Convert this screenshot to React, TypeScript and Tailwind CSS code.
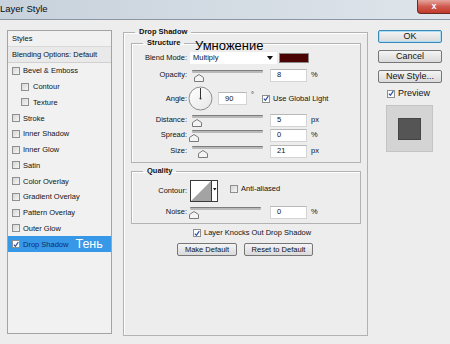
import type { ReactNode } from 'react';

const FONT = { fontFamily: '"Liberation Sans", Arial, sans-serif' };

const styleItems: { label: string; indent?: boolean; checked?: boolean; active?: boolean }[] = [
  { label: 'Bevel & Emboss' },
  { label: 'Contour', indent: true },
  { label: 'Texture', indent: true },
  { label: 'Stroke' },
  { label: 'Inner Shadow' },
  { label: 'Inner Glow' },
  { label: 'Satin' },
  { label: 'Color Overlay' },
  { label: 'Gradient Overlay' },
  { label: 'Pattern Overlay' },
  { label: 'Outer Glow' },
  { label: 'Drop Shadow', checked: true, active: true },
];

function Check({ checked = false }: { checked?: boolean }) {
  return (
    <span
      className={
        'flex h-[8px] w-[8px] shrink-0 items-center justify-center border border-[#8e8f8f] ' +
        (checked ? 'bg-white' : 'bg-gradient-to-br from-[#d6d6d6] to-[#f6f6f6]')
      }
    >
      {checked ? (
        <svg width="7" height="7" viewBox="0 0 7 7">
          <path d="M1 3.6 L2.8 5.6 L6.2 0.8" fill="none" stroke="#2c4f9e" strokeWidth="1.4" />
        </svg>
      ) : null}
    </span>
  );
}

function Slider({ pos }: { pos: number }) {
  return (
    <div className="relative h-full w-[71px]">
      <div className="mt-[2px] h-[3px] rounded-[1px] border-t border-[#7d7d7d] bg-[#b9b9b9]" />
      <svg
        className="absolute top-[4px]"
        style={{ left: pos - 4 }}
        width="10"
        height="8"
        viewBox="0 0 10 8"
      >
        <path d="M0.5 7.5 V3.5 L5 0.5 L9.5 3.5 V7.5 Z" fill="#f4f4f4" stroke="#7a7a7a" />
      </svg>
    </div>
  );
}

function NumBox({ value, w = 'w-[37px]' }: { value: string; w?: string }) {
  return (
    <div
      className={`flex h-[13px] items-center border border-[#d4d4d4] border-t-[#b8b8b8] bg-white pl-[6px] ${w}`}
    >
      {value}
    </div>
  );
}

function SliderRow({ label, value, unit, pos }: { label: string; value: string; unit: string; pos: number }) {
  return (
    <div className="flex h-[14px] items-center">
      <span className="w-[55px] text-right">{label}</span>
      <div className="ml-[5px] h-full">
        <Slider pos={pos} />
      </div>
      <div className="ml-[7px]">
        <NumBox value={value} />
      </div>
      <span className="ml-[4px]">{unit}</span>
    </div>
  );
}

function Group({ title, className, children }: { title: string; className?: string; children: ReactNode }) {
  return (
    <fieldset
      className={`border border-[#b2b2b2] shadow-[inset_1px_1px_0_#ffffff] ${className ?? ''}`}
    >
      <legend className="ml-[11px] px-[4px] text-[7.5px] font-bold leading-[10px]">{title}</legend>
      {children}
    </fieldset>
  );
}

function Button({ children, primary = false, className }: { children: ReactNode; primary?: boolean; className?: string }) {
  return (
    <div
      className={
        'flex items-center justify-center rounded-[2px] border bg-gradient-to-b from-[#f4f4f4] to-[#dadada] ' +
        (primary ? 'border-[#3d8ab9] shadow-[inset_0_0_0_1px_#a9dcf5] ' : 'border-[#767676] ') +
        (className ?? '')
      }
    >
      {children}
    </div>
  );
}

export default function App() {
  return (
    <div className="h-[344px] w-[450px] overflow-hidden bg-[#ededed] text-[7.5px] text-[#111]" style={FONT}>
      {/* title bar */}
      <div className="flex h-[20px] items-start border-b border-[#8a96a3] bg-gradient-to-r from-[#c8d2dc] via-[#d3dbe3] to-[#dfe5eb]">
        <span className="ml-0 mt-[3px] text-[9.5px] leading-[12px] text-[#0c0c0c]">Layer Style</span>
        <div className="ml-auto flex h-[14px] w-[33px] items-center justify-center rounded-bl-[4px] border-b border-l border-[#6b2a24] bg-gradient-to-b from-[#e4a59e] via-[#cf5a4e] to-[#c0392b]">
          <span className="text-[9px] font-bold leading-none text-white">x</span>
        </div>
      </div>

      <div className="flex items-start">
        {/* styles list */}
        <div className="ml-[7px] mt-[10px] h-[304px] w-[105px] border border-[#a3a3a3] bg-[#f1f1f1]">
          <div className="flex h-[16px] items-center border-b border-[#d9d9d9] pl-[4px]">Styles</div>
          <div className="flex h-[16px] items-center border-b border-[#d0d0d0] bg-[#e9e9e9] pl-[4px]">
            Blending Options: Default
          </div>
          {styleItems.map((it) => (
            <div
              key={it.label}
              className={
                'flex h-[15.75px] items-center ' +
                (it.indent ? 'pl-[13px] ' : 'pl-[4px] ') +
                (it.active ? 'bg-[#3898e8] text-[#0d2b6b]' : '')
              }
            >
              <Check checked={it.checked} />
              <span className={it.indent ? 'ml-[4px]' : 'ml-[3px]'}>{it.label}</span>
              {it.active ? (
                <span className="ml-[7px] text-[12.5px] leading-[12px] text-white">Тень</span>
              ) : null}
            </div>
          ))}
        </div>

        {/* drop shadow panel */}
        <Group title="Drop Shadow" className="ml-[11px] mt-[7px] h-[309px] w-[245px]">
          <Group title="Structure" className="ml-[7px] mt-[1px] w-[230px] pb-[4px] pt-[4px]">
            <div className="relative flex h-[12px] items-center">
              <span className="absolute left-[63px] top-[-14px] text-[13px] leading-[15px] text-black">Умножение</span>
              <span className="w-[55px] text-right">Blend Mode:</span>
              <div className="ml-[3px] flex h-[12px] w-[87px] items-center justify-between bg-white pl-[3px] pr-[4px]">
                <span>Multiply</span>
                <svg width="6" height="4" viewBox="0 0 6 4">
                  <path d="M0 0 H6 L3 4 Z" fill="#111" />
                </svg>
              </div>
              <div className="ml-[2px] h-[10px] w-[30px] border border-[#8a8a8a] bg-[#4a0202]" />
            </div>
            <div className="mt-[4px]">
              <SliderRow label="Opacity:" value="8" unit="%" pos={6} />
            </div>
            <div className="mt-[4px] flex h-[25px] items-center">
              <span className="w-[55px] text-right">Angle:</span>
              <svg className="ml-[1px]" width="25" height="25" viewBox="0 0 25 25">
                <defs>
                  <linearGradient id="dial" x1="0" y1="0" x2="1" y2="1">
                    <stop offset="0" stopColor="#ffffff" />
                    <stop offset="1" stopColor="#e6e6e6" />
                  </linearGradient>
                </defs>
                <circle cx="12.5" cy="12.5" r="11.5" fill="url(#dial)" stroke="#8d8d8d" />
                <line x1="12.5" y1="12.5" x2="12.5" y2="2" stroke="#333" strokeWidth="1" />
                <circle cx="12.5" cy="12.5" r="1" fill="#333" />
              </svg>
              <div className="ml-[5px]">
                <NumBox value="90" w="w-[29px]" />
              </div>
              <span className="ml-[4px] self-start mt-[5px] leading-none">°</span>
              <span className="ml-[8px]">
                <Check checked />
              </span>
              <span className="ml-[3px]">Use Global Light</span>
            </div>
            <div className="mt-[2px]">
              <SliderRow label="Distance:" value="5" unit="px" pos={4} />
            </div>
            <div className="mt-[1px]">
              <SliderRow label="Spread:" value="0" unit="%" pos={1} />
            </div>
            <div className="mt-[2px]">
              <SliderRow label="Size:" value="21" unit="px" pos={10} />
            </div>
          </Group>

          <Group title="Quality" className="ml-[7px] mt-[3px] w-[230px] pb-[4px] pt-[4px]">
            <div className="flex h-[22px] items-center">
              <span className="w-[55px] text-right">Contour:</span>
              <svg className="ml-[3px]" width="28" height="22" viewBox="0 0 28 22">
                <rect x="0.5" y="0.5" width="27" height="21" fill="#fff" stroke="#3a3a3a" />
                <path d="M1 21 L21 1 V21 Z" fill="#a3a3a3" />
                <line x1="21.5" y1="1" x2="21.5" y2="21" stroke="#3a3a3a" />
                <path d="M23 8 H26.5 L24.75 10.5 Z" fill="#111" />
              </svg>
              <span className="ml-[12px] mt-[-4px]">
                <Check />
              </span>
              <span className="ml-[3px] mt-[-4px]">Anti-aliased</span>
            </div>
            <div className="mt-[3px] flex h-[14px] items-center">
              <span className="w-[55px] text-right">Noise:</span>
              <div className="ml-[3px] h-full">
                <Slider pos={3} />
              </div>
              <div className="ml-[9px]">
                <NumBox value="0" />
              </div>
              <span className="ml-[4px]">%</span>
            </div>
          </Group>

          <div className="mt-[4px] flex h-[10px] items-center pl-[69px]">
            <Check checked />
            <span className="ml-[3px]">Layer Knocks Out Drop Shadow</span>
          </div>
          <div className="mt-[5px] flex pl-[53px]">
            <Button className="h-[13px] w-[60px]">Make Default</Button>
            <Button className="ml-[7px] h-[13px] w-[69px]">Reset to Default</Button>
          </div>
        </Group>

        {/* right column */}
        <div className="ml-[10px] mt-[10px] flex w-[64px] flex-col text-[9px]">
          <Button primary className="h-[13px]">OK</Button>
          <Button className="mt-[7px] h-[13px]">Cancel</Button>
          <Button className="mt-[7px] h-[13px]">New Style...</Button>
          <div className="mt-[6px] flex h-[9px] items-center pl-[9px]">
            <Check checked />
            <span className="ml-[3px]">Preview</span>
          </div>
          <div className="ml-[8px] mt-[7px] flex h-[47px] w-[47px] items-center justify-center border border-[#c4c4c4] bg-[#d4d4d4]">
            <div className="h-[22px] w-[23px] border border-[#444] bg-[#555555]" />
          </div>
        </div>
      </div>
    </div>
  );
}
